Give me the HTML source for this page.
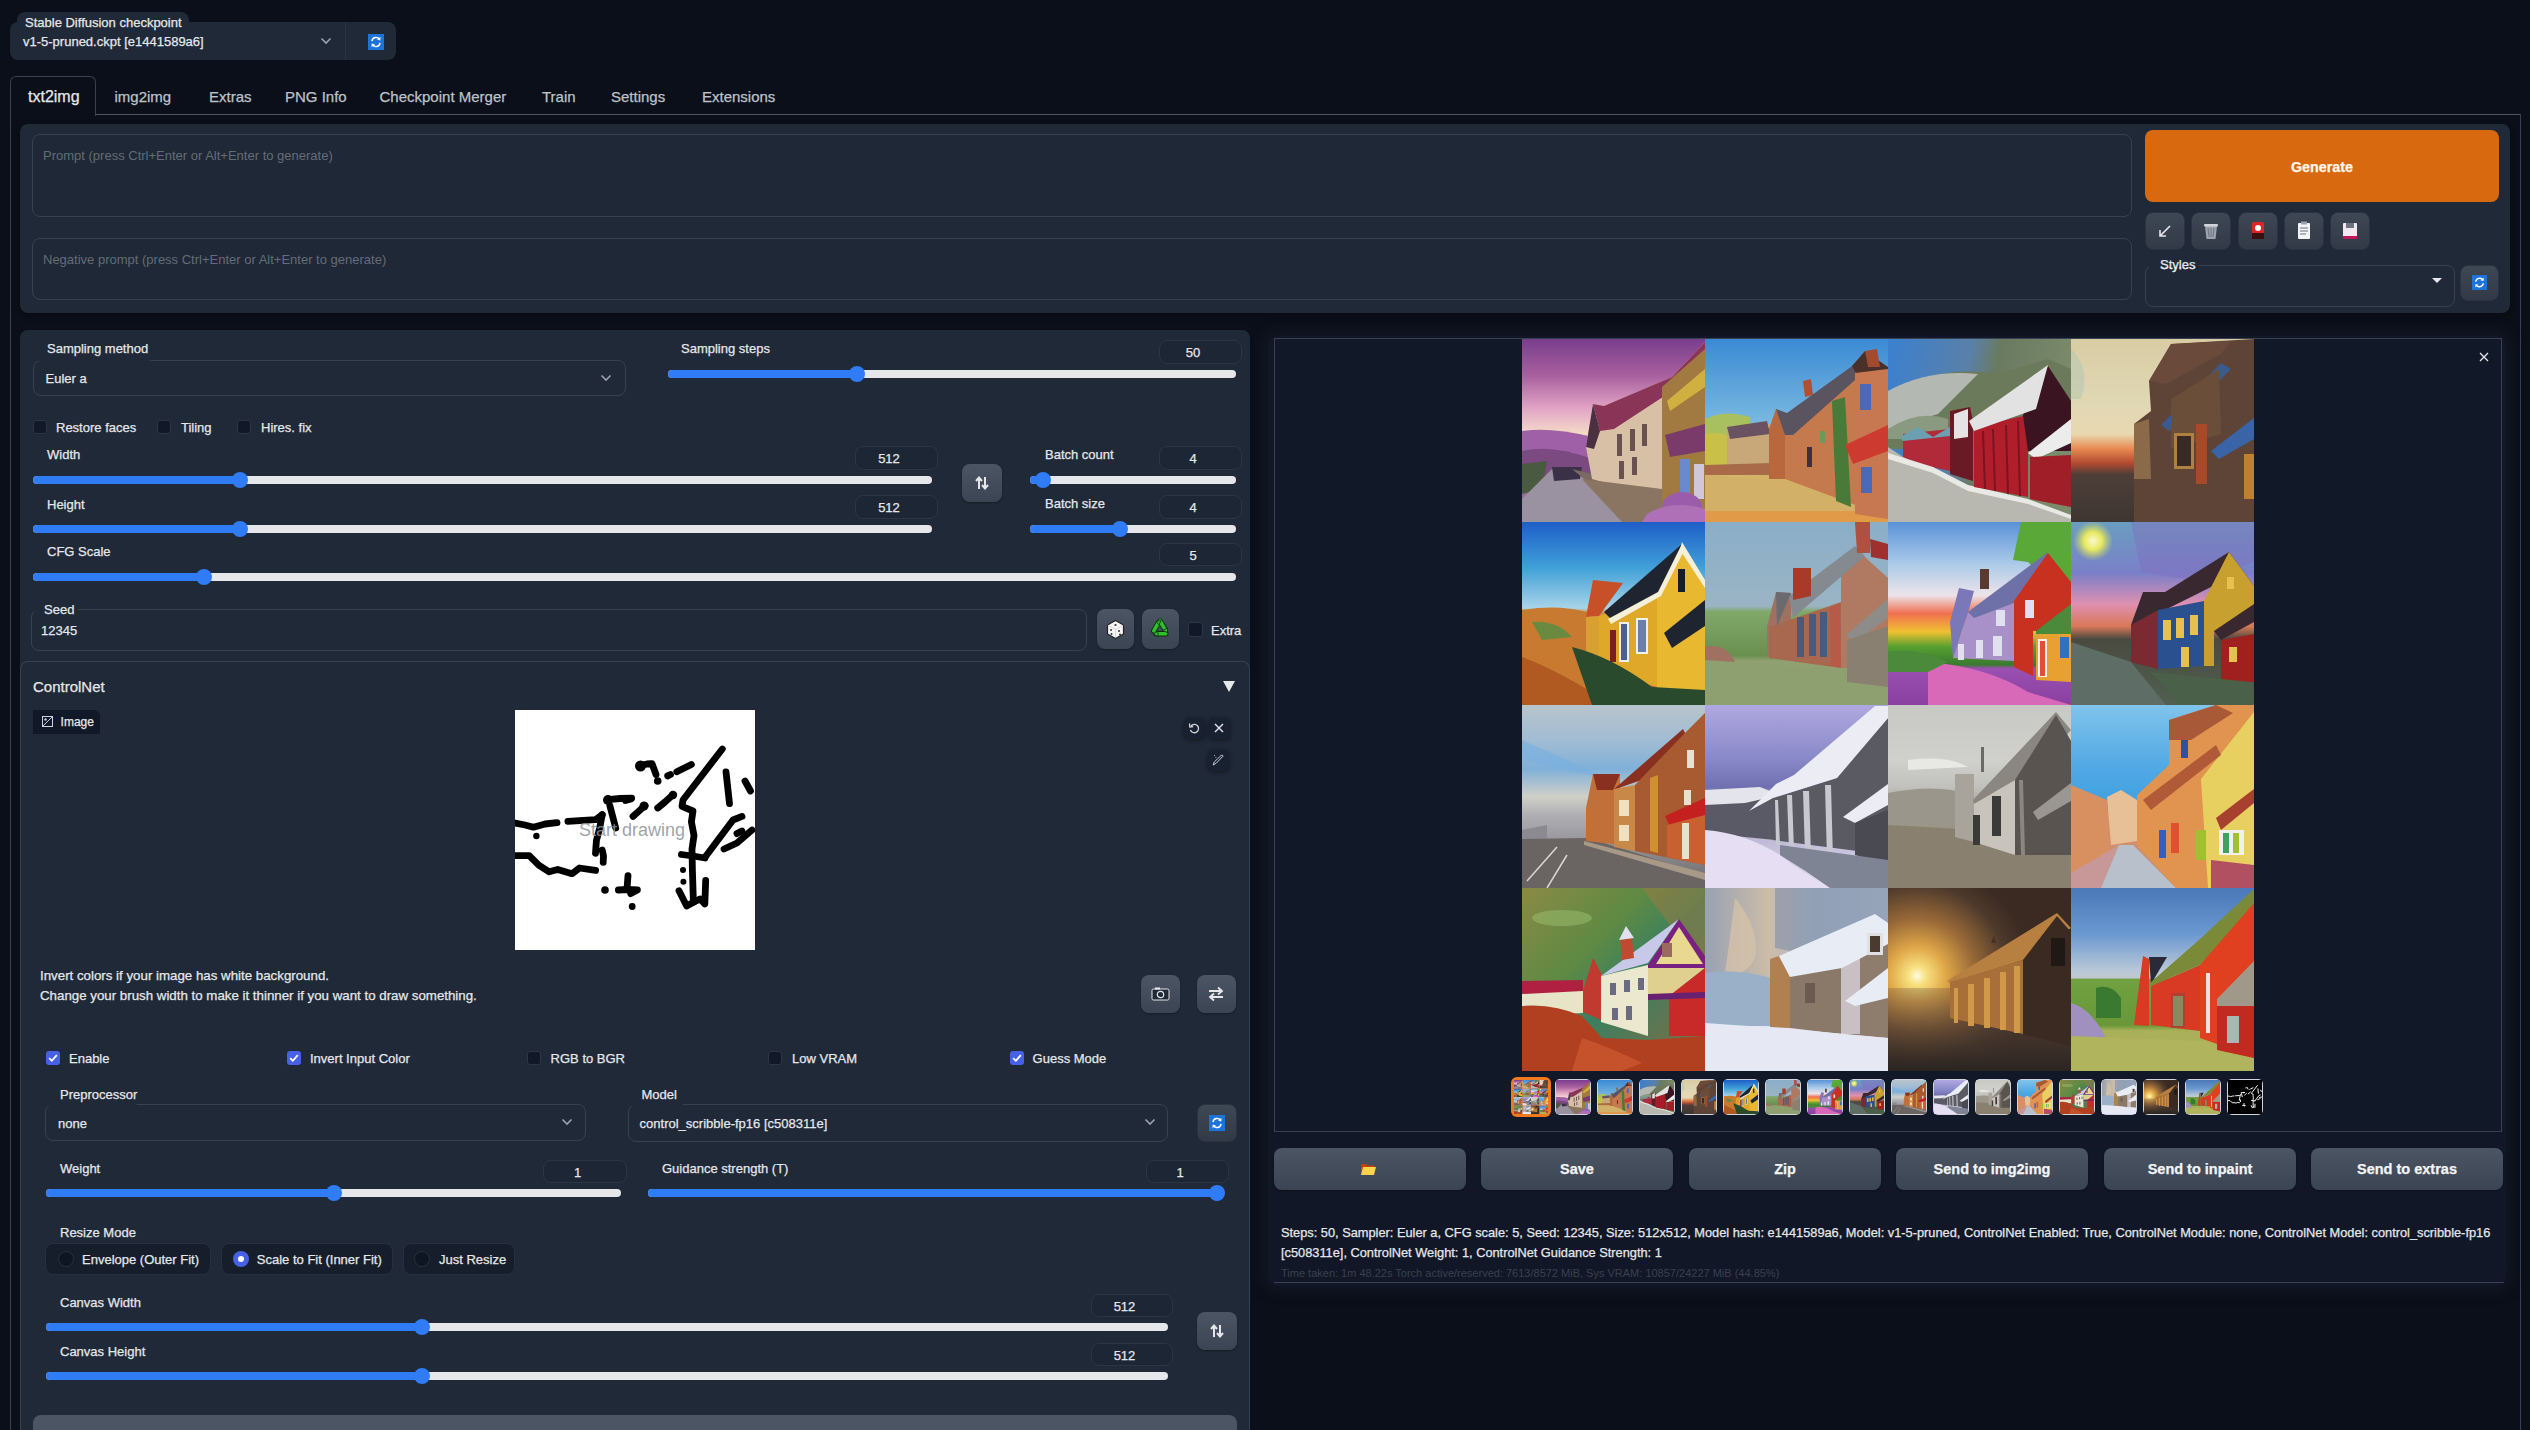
<!DOCTYPE html><html><head><meta charset="utf-8"><style>
html,body{margin:0;padding:0;background:#0b0f19;width:2530px;height:1430px;overflow:hidden;font-family:"Liberation Sans",sans-serif}
body>div,body>span,body>svg{position:absolute}
.t{position:absolute;white-space:nowrap;-webkit-text-stroke:0.25px currentColor}
.trk{position:absolute;background:#e5e7eb;border-radius:4px}
.fill{position:absolute;background:#2f7cf6;border-radius:4px}
.thumb{position:absolute;width:16px;height:16px;border-radius:8px;background:#2f7cf6}
.btn{position:absolute;background:linear-gradient(180deg,#4b5563 0%,#3b4452 100%);box-shadow:0 1px 2px rgba(0,0,0,.3)}
.tool{position:absolute;background:linear-gradient(180deg,#3e4754 0%,#323a47 100%);border-radius:8px;border:1px solid #2b3340;box-sizing:border-box}
</style></head><body>
<div style="left:10px;top:22px;width:386px;height:38px;background:#1f2937;border-radius:8px"></div>
<div style="left:17px;top:12px;width:172px;height:22px;background:#1f2937;border-radius:8px 8px 0 0"></div>
<div style="left:345px;top:22px;width:1px;height:38px;background:#2a3342"></div>
<span class="t" style="left:25px;top:13.5px;font-size:13px;line-height:17px;color:#e5e7eb;font-weight:400;">Stable Diffusion checkpoint</span>
<span class="t" style="left:23px;top:33.0px;font-size:13px;line-height:17px;color:#e5e7eb;font-weight:400;">v1-5-pruned.ckpt [e1441589a6]</span>
<svg style="left:320px;top:37px" width="12" height="8" viewBox="0 0 12 8"><path d="M1.5 1.5 L6 6 L10.5 1.5" stroke="#9ca3af" stroke-width="1.6" fill="none"/></svg>
<svg style="left:368px;top:34px" width="16" height="16" viewBox="0 0 16 16"><rect x="0" y="0" width="16" height="16" fill="#1c74d8"/><path d="M4 7.2 A4.2 4.2 0 0 1 11.6 5.2" stroke="#fff" stroke-width="1.5" fill="none"/><path d="M12 8.8 A4.2 4.2 0 0 1 4.4 10.8" stroke="#fff" stroke-width="1.5" fill="none"/><path d="M12.6 3 L12.2 6.4 L9 5.6 Z" fill="#fff"/><path d="M3.4 13 L3.8 9.6 L7 10.4 Z" fill="#fff"/></svg>
<div style="left:96px;top:114px;width:2425px;height:1px;background:#4b5563"></div>
<div style="left:10px;top:76px;width:86px;height:40px;background:#0b0f19;border:1px solid #374151;border-bottom:none;border-radius:6px 6px 0 0;box-sizing:border-box"></div>
<div style="left:10px;top:115px;width:1px;height:1315px;background:#374151"></div>
<div style="left:2520px;top:114px;width:1px;height:1316px;background:#374151"></div>
<span class="t" style="left:28px;top:86.5px;font-size:16px;line-height:20px;color:#e5e7eb;font-weight:400;">txt2img</span>
<span class="t" style="left:114.5px;top:87.0px;font-size:15px;line-height:19px;color:#bcc2cb;font-weight:400;">img2img</span>
<span class="t" style="left:209px;top:87.0px;font-size:15px;line-height:19px;color:#bcc2cb;font-weight:400;">Extras</span>
<span class="t" style="left:285px;top:87.0px;font-size:15px;line-height:19px;color:#bcc2cb;font-weight:400;">PNG Info</span>
<span class="t" style="left:379.5px;top:87.0px;font-size:15px;line-height:19px;color:#bcc2cb;font-weight:400;">Checkpoint Merger</span>
<span class="t" style="left:542px;top:87.0px;font-size:15px;line-height:19px;color:#bcc2cb;font-weight:400;">Train</span>
<span class="t" style="left:611px;top:87.0px;font-size:15px;line-height:19px;color:#bcc2cb;font-weight:400;">Settings</span>
<span class="t" style="left:702px;top:87.0px;font-size:15px;line-height:19px;color:#bcc2cb;font-weight:400;">Extensions</span>
<div style="left:20px;top:124px;width:2490px;height:189px;background:#1f2937;border-radius:8px;box-shadow:0 2px 6px rgba(0,0,0,.35)"></div>
<div style="left:32px;top:134px;width:2100px;height:83px;border:1px solid #374151;border-radius:8px;box-sizing:border-box;background:#1e2836"></div>
<div style="left:32px;top:238px;width:2100px;height:62px;border:1px solid #374151;border-radius:8px;box-sizing:border-box;background:#1e2836"></div>
<span class="t" style="left:43px;top:147.0px;font-size:13px;line-height:17px;color:#646c78;font-weight:400;-webkit-text-stroke:0">Prompt (press Ctrl+Enter or Alt+Enter to generate)</span>
<span class="t" style="left:43px;top:251.0px;font-size:13px;line-height:17px;color:#646c78;font-weight:400;-webkit-text-stroke:0">Negative prompt (press Ctrl+Enter or Alt+Enter to generate)</span>
<div style="left:2145px;top:130px;width:354px;height:72px;background:#d9690f;border-radius:8px"></div>
<span class="t" style="left:2145.0px;width:354px;text-align:center;top:157.8px;font-size:14.3px;line-height:18.3px;color:#fff7ed;font-weight:700;">Generate</span>
<div class="tool" style="left:2145px;top:212px;width:40px;height:38px"></div>
<div class="tool" style="left:2191px;top:212px;width:40px;height:38px"></div>
<div class="tool" style="left:2238px;top:212px;width:40px;height:38px"></div>
<div class="tool" style="left:2284px;top:212px;width:40px;height:38px"></div>
<div class="tool" style="left:2330px;top:212px;width:40px;height:38px"></div>
<svg style="left:2155px;top:221px" width="20" height="20" viewBox="0 0 20 20"><path d="M15 5 L5 15 M5 9 L5 15 L11 15" stroke="#e5e7eb" stroke-width="1.6" fill="none"/></svg>
<svg style="left:2202px;top:221px" width="18" height="20" viewBox="0 0 18 20"><path d="M3 5 L15 5 L13.5 18 L4.5 18 Z" fill="#9ca3af"/><rect x="2" y="3" width="14" height="2.5" rx="1" fill="#d1d5db"/><path d="M6 7 L7 16 M9 7 L9 16 M12 7 L11 16" stroke="#6b7280" stroke-width="1"/></svg>
<svg style="left:2250px;top:221px" width="16" height="20" viewBox="0 0 16 20"><rect x="2" y="1" width="12" height="17" rx="1.5" fill="#dc2626"/><circle cx="8" cy="7" r="3" fill="#fff"/><rect x="2" y="12" width="12" height="6" fill="#3a1010"/></svg>
<svg style="left:2296px;top:221px" width="16" height="20" viewBox="0 0 16 20"><rect x="2" y="2" width="12" height="16" rx="1" fill="#f3f4f6"/><rect x="5" y="0.5" width="6" height="3" fill="#9ca3af"/><path d="M4 7 H12 M4 10 H12 M4 13 H10" stroke="#6b7280" stroke-width="1"/></svg>
<svg style="left:2342px;top:221px" width="16" height="20" viewBox="0 0 16 20"><rect x="1" y="2" width="14" height="16" rx="1" fill="#f3e8f0"/><rect x="4" y="2" width="8" height="5" fill="#6b7280"/><rect x="1" y="15" width="14" height="3" fill="#be185d"/></svg>
<span class="t" style="left:2160px;top:255.5px;font-size:13px;line-height:17px;color:#e5e7eb;font-weight:400;">Styles</span>
<div style="left:2145px;top:265px;width:310px;height:42px;border:1px solid #374151;border-radius:8px;box-sizing:border-box"></div>
<div style="left:2145px;top:252px;width:57px;height:15px;background:#1f2937;border-radius:0 0 8px 0"></div>
<span class="t" style="left:2160px;top:255.5px;font-size:13px;line-height:17px;color:#e5e7eb;font-weight:400;">Styles</span>
<svg style="left:2431px;top:277px" width="12" height="7" viewBox="0 0 12 7"><path d="M1 1 L11 1 L6 6 Z" fill="#e5e7eb"/></svg>
<div class="tool" style="left:2460px;top:265px;width:39px;height:36px"></div>
<svg style="left:2472px;top:275px" width="15" height="15" viewBox="0 0 16 16"><rect x="0" y="0" width="16" height="16" fill="#1c74d8"/><path d="M4 7.2 A4.2 4.2 0 0 1 11.6 5.2" stroke="#fff" stroke-width="1.5" fill="none"/><path d="M12 8.8 A4.2 4.2 0 0 1 4.4 10.8" stroke="#fff" stroke-width="1.5" fill="none"/><path d="M12.6 3 L12.2 6.4 L9 5.6 Z" fill="#fff"/><path d="M3.4 13 L3.8 9.6 L7 10.4 Z" fill="#fff"/></svg>
<div style="left:20px;top:330px;width:1230px;height:1100px;background:#1f2937;border-radius:8px 8px 0 0"></div>
<div style="left:33px;top:360px;width:593px;height:36px;border:1px solid #374151;border-radius:8px;box-sizing:border-box"></div>
<div style="left:33px;top:338px;width:122px;height:23px;background:#1f2937;border-radius:0 0 8px 0"></div>
<span class="t" style="left:47px;top:340.0px;font-size:13px;line-height:17px;color:#e5e7eb;font-weight:400;">Sampling method</span>
<span class="t" style="left:45.5px;top:370.0px;font-size:13px;line-height:17px;color:#e5e7eb;font-weight:400;">Euler a</span>
<svg style="left:600px;top:374px" width="12" height="8" viewBox="0 0 12 8"><path d="M1.5 1.5 L6 6 L10.5 1.5" stroke="#9ca3af" stroke-width="1.6" fill="none"/></svg>
<span class="t" style="left:681px;top:339.5px;font-size:13px;line-height:17px;color:#e5e7eb;font-weight:400;">Sampling steps</span>
<div style="left:1159px;top:340px;width:83px;height:24px;border:1px solid #2c3543;border-radius:8px;background:#1d2634;box-sizing:border-box"></div>
<span class="t" style="left:1151.5px;width:83px;text-align:center;top:344.0px;font-size:13px;line-height:17px;color:#e5e7eb;font-weight:400;">50</span>
<div class="trk" style="left:668px;top:370.0px;width:568px;height:8px"></div>
<div class="fill" style="left:668px;top:370.0px;width:189px;height:8px"></div>
<div class="thumb" style="left:849px;top:366px"></div>
<div style="left:33px;top:420px;width:14px;height:14px;border-radius:3px;background:#111827;border:1px solid #2c3645;box-sizing:border-box"></div>
<span class="t" style="left:56px;top:418.5px;font-size:13px;line-height:17px;color:#e5e7eb;font-weight:400;">Restore faces</span>
<div style="left:157px;top:420px;width:14px;height:14px;border-radius:3px;background:#111827;border:1px solid #2c3645;box-sizing:border-box"></div>
<span class="t" style="left:181px;top:418.5px;font-size:13px;line-height:17px;color:#e5e7eb;font-weight:400;">Tiling</span>
<div style="left:237px;top:420px;width:14px;height:14px;border-radius:3px;background:#111827;border:1px solid #2c3645;box-sizing:border-box"></div>
<span class="t" style="left:261px;top:418.5px;font-size:13px;line-height:17px;color:#e5e7eb;font-weight:400;">Hires. fix</span>
<span class="t" style="left:47px;top:445.5px;font-size:13px;line-height:17px;color:#e5e7eb;font-weight:400;">Width</span>
<div style="left:855px;top:446px;width:83px;height:24px;border:1px solid #2c3543;border-radius:8px;background:#1d2634;box-sizing:border-box"></div>
<span class="t" style="left:847.5px;width:83px;text-align:center;top:450.0px;font-size:13px;line-height:17px;color:#e5e7eb;font-weight:400;">512</span>
<div class="trk" style="left:33px;top:476.0px;width:899px;height:8px"></div>
<div class="fill" style="left:33px;top:476.0px;width:207px;height:8px"></div>
<div class="thumb" style="left:232px;top:472px"></div>
<span class="t" style="left:47px;top:495.5px;font-size:13px;line-height:17px;color:#e5e7eb;font-weight:400;">Height</span>
<div style="left:855px;top:495px;width:83px;height:24px;border:1px solid #2c3543;border-radius:8px;background:#1d2634;box-sizing:border-box"></div>
<span class="t" style="left:847.5px;width:83px;text-align:center;top:499.0px;font-size:13px;line-height:17px;color:#e5e7eb;font-weight:400;">512</span>
<div class="trk" style="left:33px;top:525.0px;width:899px;height:8px"></div>
<div class="fill" style="left:33px;top:525.0px;width:207px;height:8px"></div>
<div class="thumb" style="left:232px;top:521px"></div>
<div class="btn" style="left:962px;top:464px;width:40px;height:38px;border-radius:8px;"></div>
<svg style="left:974px;top:475px" width="16" height="16" viewBox="0 0 16 16"><path d="M5 14 V3 M2 6 L5 2.5 L8 6" stroke="#e5e7eb" stroke-width="2" fill="none"/><path d="M11 2 V13 M8 10 L11 13.5 L14 10" stroke="#e5e7eb" stroke-width="2" fill="none"/></svg>
<span class="t" style="left:1045px;top:446.0px;font-size:13px;line-height:17px;color:#e5e7eb;font-weight:400;">Batch count</span>
<div style="left:1159px;top:446px;width:83px;height:24px;border:1px solid #2c3543;border-radius:8px;background:#1d2634;box-sizing:border-box"></div>
<span class="t" style="left:1151.5px;width:83px;text-align:center;top:450.0px;font-size:13px;line-height:17px;color:#e5e7eb;font-weight:400;">4</span>
<div class="trk" style="left:1030px;top:476.0px;width:206px;height:8px"></div>
<div class="fill" style="left:1030px;top:476.0px;width:13px;height:8px"></div>
<div class="thumb" style="left:1035px;top:472px"></div>
<span class="t" style="left:1045px;top:495.1px;font-size:13px;line-height:17px;color:#e5e7eb;font-weight:400;">Batch size</span>
<div style="left:1159px;top:495px;width:83px;height:24px;border:1px solid #2c3543;border-radius:8px;background:#1d2634;box-sizing:border-box"></div>
<span class="t" style="left:1151.5px;width:83px;text-align:center;top:499.0px;font-size:13px;line-height:17px;color:#e5e7eb;font-weight:400;">4</span>
<div class="trk" style="left:1030px;top:525.0px;width:206px;height:8px"></div>
<div class="fill" style="left:1030px;top:525.0px;width:90px;height:8px"></div>
<div class="thumb" style="left:1112px;top:521px"></div>
<span class="t" style="left:47px;top:543.0px;font-size:13px;line-height:17px;color:#e5e7eb;font-weight:400;">CFG Scale</span>
<div style="left:1159px;top:543px;width:83px;height:23px;border:1px solid #2c3543;border-radius:8px;background:#1d2634;box-sizing:border-box"></div>
<span class="t" style="left:1151.5px;width:83px;text-align:center;top:546.5px;font-size:13px;line-height:17px;color:#e5e7eb;font-weight:400;">5</span>
<div class="trk" style="left:33px;top:573.0px;width:1203px;height:8px"></div>
<div class="fill" style="left:33px;top:573.0px;width:171px;height:8px"></div>
<div class="thumb" style="left:196px;top:569px"></div>
<div style="left:31px;top:609px;width:1056px;height:42px;border:1px solid #374151;border-radius:8px;box-sizing:border-box"></div>
<div style="left:31px;top:598px;width:49px;height:14px;background:#1f2937;border-radius:0 0 8px 0"></div>
<span class="t" style="left:44px;top:601.1px;font-size:13px;line-height:17px;color:#e5e7eb;font-weight:400;">Seed</span>
<span class="t" style="left:41px;top:621.5px;font-size:13px;line-height:17px;color:#e5e7eb;font-weight:400;">12345</span>
<div class="btn" style="left:1097px;top:609px;width:37px;height:40px;border-radius:8px;"></div>
<div class="btn" style="left:1142px;top:609px;width:37px;height:40px;border-radius:8px;"></div>
<svg style="left:1105px;top:619px" width="21" height="21" viewBox="0 0 21 21"><path d="M10.5 1.5 L18.5 6 L18.5 15 L10.5 19.5 L2.5 15 L2.5 6 Z" fill="#f5f5f5" stroke="#222" stroke-width="1.2"/><path d="M2.8 6.2 L10.5 10.5 L18.2 6.2 M10.5 10.5 L10.5 19" stroke="#cfcfcf" stroke-width="0.8" fill="none"/><circle cx="10.5" cy="6" r="1.1" fill="#333"/><circle cx="6" cy="11" r="1" fill="#333"/><circle cx="6.5" cy="15" r="1" fill="#333"/><circle cx="14" cy="12" r="1" fill="#333"/><circle cx="15" cy="15.5" r="1" fill="#333"/></svg>
<svg style="left:1150px;top:618px" width="21" height="21" viewBox="0 0 21 21"><g fill="none" stroke-linecap="round" stroke-linejoin="round"><path d="M10 3 L14.8 11.2 M15.8 15.8 L6 15.8 M3.8 12.8 L8.3 5" stroke="#0a300a" stroke-width="5.4"/><path d="M10 3 L14.8 11.2 M15.8 15.8 L6 15.8 M3.8 12.8 L8.3 5" stroke="#2fbf2f" stroke-width="3.6"/></g><path d="M12.5 12.5 L17.5 10 L17.5 14.5 Z" fill="#2fbf2f" stroke="#0a300a" stroke-width="0.8"/><path d="M8 18.5 L3.5 15.8 L8 13 Z" fill="#2fbf2f" stroke="#0a300a" stroke-width="0.8"/><path d="M6 3.5 L11 2.5 L9 7 Z" fill="#2fbf2f" stroke="#0a300a" stroke-width="0.8"/></svg>
<div style="left:1188px;top:622px;width:15px;height:15px;border-radius:3px;background:#111827;border:1px solid #2c3645;box-sizing:border-box"></div>
<span class="t" style="left:1211px;top:621.5px;font-size:13px;line-height:17px;color:#e5e7eb;font-weight:400;">Extra</span>
<div style="left:20px;top:661px;width:1230px;height:769px;border:1px solid #374151;border-bottom:none;border-radius:8px 8px 0 0;box-sizing:border-box"></div>
<span class="t" style="left:33px;top:677.0px;font-size:15px;line-height:19px;color:#e5e7eb;font-weight:400;">ControlNet</span>
<svg style="left:1222px;top:680px" width="14" height="13" viewBox="0 0 14 13"><path d="M1 1 L13 1 L7 12 Z" fill="#e5e7eb"/></svg>
<div style="left:33px;top:710px;width:67px;height:24px;background:#111827;border-radius:0 6px 0 0"></div>
<svg style="left:42px;top:716px" width="11" height="11" viewBox="0 0 11 11"><rect x="0.5" y="0.5" width="10" height="10" fill="none" stroke="#cbd5e1" stroke-width="1"/><path d="M1 10 L10 1" stroke="#cbd5e1" stroke-width="1"/><circle cx="3.5" cy="3.5" r="1.2" fill="#cbd5e1"/></svg>
<span class="t" style="left:60.6px;top:714.0px;font-size:12px;line-height:16px;color:#e5e7eb;font-weight:400;">Image</span>
<div style="left:515px;top:710px;width:240px;height:240px;background:#fff"></div>
<svg style="left:515px;top:710px" width="240" height="240" viewBox="0 0 240 240"><defs><g id="scrib" fill="none" stroke-width="6.8" stroke-linecap="round" stroke-linejoin="round"><path d="M0 113 L10 115 L18.5 117.2 L30 114 L42 112.6"/><path d="M52.9 111.4 L80.5 109.7 L87.2 104.7"/><path d="M87.2 104.7 L84.7 118 L81.4 130.7 L80.5 143.3"/><path d="M87.2 140 L88.5 146 L88.2 152.3"/><path d="M0 145.7 L14.2 145.7 L23.7 155.2 L34.2 161.8 L42.7 159.4 L57 163.7 L64.5 158 L80.6 160.4"/><path d="M93 89.6 L105 88.5 L116.6 88.2"/><path d="M94.8 95.4 L100.7 118"/><path d="M118 106.4 L124 101 L130 95.5"/><path d="M110.5 90.5 L116 89"/><path d="M125.5 55.5 L132 54 L137 53.6 L141 64.5"/><path d="M152.7 65.9 L155.5 64.5"/><path d="M161.8 61.8 L176.4 54.5"/><path d="M142.7 98 L150 92 L158.2 84.5"/><path d="M207.3 39 L168 90 L167 96.4 L178 101 L176.4 111.8 L179 125.5 L177 139 L177.4 160 L178.4 192.2"/><path d="M166.4 144.5 L178 146 L190 148"/><path d="M190 147.3 L218 110 L227 106.4"/><path d="M209 139 L222 133 L237 120"/><path d="M222 123.6 L227 121"/><path d="M211 61.8 L214.5 93.6"/><path d="M230 71 L235.5 81"/><path d="M164 180.8 L171.7 196 L178 192.5 L185 189 L189.8 194 L190.7 170.4"/><path d="M113 165.6 L112 179"/><path d="M103.4 180 L112 179.5 L122.4 180 L115.7 183.6"/></g></defs><use href="#scrib" stroke="#000"/><g fill="#000"><circle cx="21.4" cy="126" r="3.2"/><circle cx="90" cy="180" r="3.8"/><circle cx="117.2" cy="196.5" r="3.4"/><circle cx="142.7" cy="71" r="3.8"/><circle cx="125.5" cy="56" r="5.5"/><circle cx="93" cy="90" r="5"/><circle cx="168" cy="160" r="3"/><circle cx="168.4" cy="171.8" r="3"/><circle cx="158" cy="85" r="4.2"/><circle cx="129" cy="96" r="4.5"/></g></svg>
<span class="t" style="left:579px;top:819px;font-size:18px;line-height:22px;color:rgba(140,146,156,.85);-webkit-text-stroke:0">Start drawing</span>
<div style="left:1184px;top:718px;width:21px;height:21px;background:#182130;border-radius:5px;box-shadow:0 1px 4px rgba(0,0,0,.45)"></div>
<div style="left:1209px;top:718px;width:21px;height:21px;background:#182130;border-radius:5px;box-shadow:0 1px 4px rgba(0,0,0,.45)"></div>
<div style="left:1208px;top:750px;width:21px;height:21px;background:#182130;border-radius:5px;box-shadow:0 1px 4px rgba(0,0,0,.45)"></div>
<svg style="left:1188px;top:722px" width="13" height="13" viewBox="0 0 13 13"><path d="M3 4 A4.2 4.2 0 1 1 2.4 8" stroke="#d1d5db" stroke-width="1.3" fill="none"/><path d="M1.5 1.5 L1.8 5 L5.2 4.6" stroke="#d1d5db" stroke-width="1.3" fill="none"/></svg>
<svg style="left:1213px;top:722px" width="12" height="12" viewBox="0 0 12 12"><path d="M2 2 L10 10 M10 2 L2 10" stroke="#e5e7eb" stroke-width="1.4"/></svg>
<svg style="left:1211px;top:753px" width="14" height="14" viewBox="0 0 14 14"><path d="M2.2 12 L3.2 9 L10.2 2.4 Q11.8 1.6 12 3.2 L5.2 10.2 Z" stroke="#c8ccd4" stroke-width="1" fill="none"/><path d="M3.5 2.2 L3.8 3 M4.8 4.2 L5 5" stroke="#c8ccd4" stroke-width="1"/></svg>
<span class="t" style="left:40px;top:967.4px;font-size:13.3px;line-height:17.3px;color:#e5e7eb;font-weight:400;">Invert colors if your image has white background.</span>
<span class="t" style="left:40px;top:987.4px;font-size:13.3px;line-height:17.3px;color:#e5e7eb;font-weight:400;">Change your brush width to make it thinner if you want to draw something.</span>
<div class="btn" style="left:1141px;top:975px;width:39px;height:38px;border-radius:8px;"></div>
<div class="btn" style="left:1197px;top:975px;width:39px;height:38px;border-radius:8px;"></div>
<svg style="left:1151px;top:986px" width="19" height="16" viewBox="0 0 19 16"><rect x="1" y="3" width="17" height="11" rx="1.5" fill="#1f2937" stroke="#e5e7eb" stroke-width="1"/><circle cx="9.5" cy="8.5" r="3.2" fill="none" stroke="#e5e7eb" stroke-width="1.2"/><rect x="4" y="1.5" width="5" height="2" fill="#e5e7eb"/></svg>
<svg style="left:1207px;top:986px" width="18" height="16" viewBox="0 0 18 16"><path d="M2 5 H15 M11 1.5 L15 5 L11 8.5" stroke="#e5e7eb" stroke-width="1.8" fill="none"/><path d="M16 11 H3 M7 7.5 L3 11 L7 14.5" stroke="#e5e7eb" stroke-width="1.8" fill="none"/></svg>
<div style="left:46px;top:1051px;width:14px;height:14px;border-radius:3px;background:#4761e6"></div>
<svg style="left:46px;top:1051px" width="14" height="14" viewBox="0 0 14 14"><path d="M3.2 7.2 L5.8 9.8 L10.8 4.2" stroke="#fff" stroke-width="1.8" fill="none"/></svg>
<span class="t" style="left:69px;top:1049.5px;font-size:13px;line-height:17px;color:#e5e7eb;font-weight:400;">Enable</span>
<div style="left:287px;top:1051px;width:14px;height:14px;border-radius:3px;background:#4761e6"></div>
<svg style="left:287px;top:1051px" width="14" height="14" viewBox="0 0 14 14"><path d="M3.2 7.2 L5.8 9.8 L10.8 4.2" stroke="#fff" stroke-width="1.8" fill="none"/></svg>
<span class="t" style="left:310px;top:1049.5px;font-size:13px;line-height:17px;color:#e5e7eb;font-weight:400;">Invert Input Color</span>
<div style="left:527px;top:1051px;width:14px;height:14px;border-radius:3px;background:#111827;border:1px solid #2c3645;box-sizing:border-box"></div>
<span class="t" style="left:550.6px;top:1049.5px;font-size:13px;line-height:17px;color:#e5e7eb;font-weight:400;">RGB to BGR</span>
<div style="left:768px;top:1051px;width:14px;height:14px;border-radius:3px;background:#111827;border:1px solid #2c3645;box-sizing:border-box"></div>
<span class="t" style="left:792px;top:1049.5px;font-size:13px;line-height:17px;color:#e5e7eb;font-weight:400;">Low VRAM</span>
<div style="left:1010px;top:1051px;width:14px;height:14px;border-radius:3px;background:#4761e6"></div>
<svg style="left:1010px;top:1051px" width="14" height="14" viewBox="0 0 14 14"><path d="M3.2 7.2 L5.8 9.8 L10.8 4.2" stroke="#fff" stroke-width="1.8" fill="none"/></svg>
<span class="t" style="left:1032.6px;top:1049.5px;font-size:13px;line-height:17px;color:#e5e7eb;font-weight:400;">Guess Mode</span>
<span class="t" style="left:60px;top:1085.9px;font-size:13px;line-height:17px;color:#e5e7eb;font-weight:400;">Preprocessor</span>
<div style="left:45px;top:1104px;width:541px;height:37px;border:1px solid #374151;border-radius:8px;box-sizing:border-box"></div>
<div style="left:45px;top:1084px;width:95px;height:22px;background:#1f2937;border-radius:0 0 8px 0"></div>
<span class="t" style="left:60px;top:1085.9px;font-size:13px;line-height:17px;color:#e5e7eb;font-weight:400;">Preprocessor</span>
<span class="t" style="left:58px;top:1114.5px;font-size:13px;line-height:17px;color:#e5e7eb;font-weight:400;">none</span>
<svg style="left:561px;top:1118px" width="12" height="8" viewBox="0 0 12 8"><path d="M1.5 1.5 L6 6 L10.5 1.5" stroke="#9ca3af" stroke-width="1.6" fill="none"/></svg>
<div style="left:628px;top:1104px;width:540px;height:38px;border:1px solid #374151;border-radius:8px;box-sizing:border-box"></div>
<div style="left:628px;top:1084px;width:58px;height:22px;background:#1f2937;border-radius:0 0 8px 0"></div>
<span class="t" style="left:641.5px;top:1085.5px;font-size:13px;line-height:17px;color:#e5e7eb;font-weight:400;">Model</span>
<span class="t" style="left:639.6px;top:1114.5px;font-size:13px;line-height:17px;color:#e5e7eb;font-weight:400;">control_scribble-fp16 [c508311e]</span>
<svg style="left:1143.5px;top:1118px" width="12" height="8" viewBox="0 0 12 8"><path d="M1.5 1.5 L6 6 L10.5 1.5" stroke="#9ca3af" stroke-width="1.6" fill="none"/></svg>
<div class="tool" style="left:1197px;top:1104px;width:40px;height:38px"></div>
<svg style="left:1209px;top:1115px" width="16" height="16" viewBox="0 0 16 16"><rect x="0" y="0" width="16" height="16" fill="#1c74d8"/><path d="M4 7.2 A4.2 4.2 0 0 1 11.6 5.2" stroke="#fff" stroke-width="1.5" fill="none"/><path d="M12 8.8 A4.2 4.2 0 0 1 4.4 10.8" stroke="#fff" stroke-width="1.5" fill="none"/><path d="M12.6 3 L12.2 6.4 L9 5.6 Z" fill="#fff"/><path d="M3.4 13 L3.8 9.6 L7 10.4 Z" fill="#fff"/></svg>
<span class="t" style="left:60px;top:1160.2px;font-size:13px;line-height:17px;color:#e5e7eb;font-weight:400;">Weight</span>
<div style="left:543px;top:1160px;width:84px;height:23px;border:1px solid #2c3543;border-radius:8px;background:#1d2634;box-sizing:border-box"></div>
<span class="t" style="left:535.5px;width:84px;text-align:center;top:1163.5px;font-size:13px;line-height:17px;color:#e5e7eb;font-weight:400;">1</span>
<div class="trk" style="left:46px;top:1189.0px;width:574.5px;height:8px"></div>
<div class="fill" style="left:46px;top:1189.0px;width:287.7px;height:8px"></div>
<div class="thumb" style="left:325.7px;top:1185px"></div>
<span class="t" style="left:662px;top:1160.0px;font-size:13px;line-height:17px;color:#e5e7eb;font-weight:400;">Guidance strength (T)</span>
<div style="left:1146px;top:1160px;width:83px;height:23px;border:1px solid #2c3543;border-radius:8px;background:#1d2634;box-sizing:border-box"></div>
<span class="t" style="left:1138.5px;width:83px;text-align:center;top:1163.5px;font-size:13px;line-height:17px;color:#e5e7eb;font-weight:400;">1</span>
<div class="trk" style="left:648px;top:1189.0px;width:576px;height:8px"></div>
<div class="fill" style="left:648px;top:1189.0px;width:569px;height:8px"></div>
<div class="thumb" style="left:1209px;top:1185px"></div>
<span class="t" style="left:60px;top:1223.5px;font-size:13px;line-height:17px;color:#e5e7eb;font-weight:400;">Resize Mode</span>
<div style="left:45px;top:1243px;width:166px;height:32px;background:#161e2b;border:1px solid #263040;border-radius:8px;box-sizing:border-box"></div>
<div style="left:57.7px;top:1251px;width:16px;height:16px;border-radius:8px;background:#0f1623;border:1px solid #263040;box-sizing:border-box"></div>
<span class="t" style="left:82px;top:1250.5px;font-size:13px;line-height:17px;color:#e5e7eb;font-weight:400;">Envelope (Outer Fit)</span>
<div style="left:221px;top:1243px;width:172px;height:32px;background:#161e2b;border:1px solid #263040;border-radius:8px;box-sizing:border-box"></div>
<div style="left:232.6px;top:1251px;width:16px;height:16px;border-radius:8px;background:#4761e6"></div>
<div style="left:237.6px;top:1256px;width:6px;height:6px;border-radius:3px;background:#fff"></div>
<span class="t" style="left:256.8px;top:1250.5px;font-size:13px;line-height:17px;color:#e5e7eb;font-weight:400;">Scale to Fit (Inner Fit)</span>
<div style="left:403px;top:1243px;width:112px;height:32px;background:#161e2b;border:1px solid #263040;border-radius:8px;box-sizing:border-box"></div>
<div style="left:414px;top:1251px;width:16px;height:16px;border-radius:8px;background:#0f1623;border:1px solid #263040;box-sizing:border-box"></div>
<span class="t" style="left:439px;top:1250.5px;font-size:13px;line-height:17px;color:#e5e7eb;font-weight:400;">Just Resize</span>
<span class="t" style="left:60px;top:1293.5px;font-size:13px;line-height:17px;color:#e5e7eb;font-weight:400;">Canvas Width</span>
<div style="left:1091px;top:1294px;width:82px;height:23px;border:1px solid #2c3543;border-radius:8px;background:#1d2634;box-sizing:border-box"></div>
<span class="t" style="left:1083.5px;width:82px;text-align:center;top:1297.5px;font-size:13px;line-height:17px;color:#e5e7eb;font-weight:400;">512</span>
<div class="trk" style="left:46px;top:1323.0px;width:1122px;height:8px"></div>
<div class="fill" style="left:46px;top:1323.0px;width:376px;height:8px"></div>
<div class="thumb" style="left:414px;top:1319px"></div>
<span class="t" style="left:60px;top:1342.5px;font-size:13px;line-height:17px;color:#e5e7eb;font-weight:400;">Canvas Height</span>
<div style="left:1091px;top:1343px;width:82px;height:23px;border:1px solid #2c3543;border-radius:8px;background:#1d2634;box-sizing:border-box"></div>
<span class="t" style="left:1083.5px;width:82px;text-align:center;top:1346.5px;font-size:13px;line-height:17px;color:#e5e7eb;font-weight:400;">512</span>
<div class="trk" style="left:46px;top:1372.0px;width:1122px;height:8px"></div>
<div class="fill" style="left:46px;top:1372.0px;width:376px;height:8px"></div>
<div class="thumb" style="left:414px;top:1368px"></div>
<div class="btn" style="left:1197px;top:1312px;width:40px;height:38px;border-radius:8px;"></div>
<svg style="left:1209px;top:1323px" width="16" height="16" viewBox="0 0 16 16"><path d="M5 14 V3 M2 6 L5 2.5 L8 6" stroke="#e5e7eb" stroke-width="2" fill="none"/><path d="M11 2 V13 M8 10 L11 13.5 L14 10" stroke="#e5e7eb" stroke-width="2" fill="none"/></svg>
<div style="left:33px;top:1415px;width:1204px;height:30px;background:#4b5563;border-radius:8px 8px 0 0"></div>
<div style="left:1268px;top:336px;width:1238px;height:950px;background:#111726;border-radius:10px;box-shadow:0 0 12px 6px rgba(17,23,38,.85)"></div>
<div style="left:1274px;top:338px;width:1228px;height:793px;border:1px solid #374151;border-bottom:none;box-sizing:border-box;background:#111827"></div>
<div style="left:1274px;top:1131px;width:1228px;height:1px;background:#374151"></div>
<svg style="left:0;top:0;position:absolute" width="0" height="0"><defs><symbol id="t0" viewBox="0 0 183 183" preserveAspectRatio="none">
<defs><linearGradient id="g0s" x1="0" y1="0" x2="0" y2="1"><stop offset="0" stop-color="#7a3d8e"/><stop offset="0.2" stop-color="#a8609e"/><stop offset="0.38" stop-color="#e2a4c6"/><stop offset="0.47" stop-color="#efc8c8"/><stop offset="0.52" stop-color="#f4dcc4"/><stop offset="0.56" stop-color="#b678b2"/><stop offset="1" stop-color="#8a6a86"/></linearGradient></defs>
<rect width="183" height="183" fill="url(#g0s)"/>
<path d="M0 92 Q30 88 70 98 L70 140 L0 145 Z" fill="#a060a8"/>
<path d="M0 112 Q30 105 70 120 L70 140 L0 150 Z" fill="#7a4a80"/>
<path d="M0 125 L25 122 L20 150 L0 155 Z" fill="#4a5a40"/>
<path d="M0 183 L0 160 L30 130 L50 130 L115 183 Z" fill="#9a92a0"/>
<path d="M30 128 L60 128 L58 140 L32 142 Z" fill="#3a3048"/>
<path d="M50 130 L115 183 L140 183 L140 160 L70 135 Z" fill="#7a6a62"/>
<path d="M64 108 L71 65 L82 67 L150 38 L183 3 L183 183 L140 183 L140 160 L70 140 Z" fill="#d8c0a6"/>
<path d="M71 65 L82 67 L150 38 L183 3 L183 20 L150 52 L92 90 L78 92 Z" fill="#8a3458"/>
<path d="M64 108 L71 65 L78 92 L72 110 Z" fill="#4a3040"/>
<path d="M140 48 L183 10 L183 183 L140 183 Z" fill="#a07a40"/>
<path d="M145 62 L183 30 L183 48 L148 72 Z" fill="#d0b040"/>
<path d="M143 96 L183 85 L183 112 L148 118 Z" fill="#7a3a6a"/>
<rect x="158" y="120" width="10" height="40" fill="#6a8ad0"/>
<rect x="172" y="125" width="10" height="35" fill="#d0c8d8"/>
<rect x="95" y="95" width="5" height="22" fill="#6a5050"/><rect x="108" y="90" width="5" height="22" fill="#6a5050"/><rect x="120" y="85" width="5" height="22" fill="#6a5050"/>
<rect x="97" y="122" width="5" height="18" fill="#6a5050"/><rect x="110" y="118" width="5" height="18" fill="#6a5050"/>
<path d="M60 140 L140 150 L140 183 L100 183 Z" fill="#8a7462"/>
<ellipse cx="160" cy="168" rx="20" ry="15" fill="#9c5cac"/>
<path d="M125 175 Q150 160 183 170 L183 183 L120 183 Z" fill="#b070b8"/>
</symbol><symbol id="t1" viewBox="0 0 183 183" preserveAspectRatio="none">
<defs><linearGradient id="g1s" x1="0" y1="0" x2="0" y2="1"><stop offset="0" stop-color="#3b8ad4"/><stop offset="0.45" stop-color="#78b8e0"/><stop offset="0.6" stop-color="#b0c080"/><stop offset="0.75" stop-color="#d4b468"/><stop offset="1" stop-color="#e0a050"/></linearGradient></defs>
<rect width="183" height="183" fill="url(#g1s)"/>
<path d="M0 80 Q20 70 45 78 L50 130 L0 130 Z" fill="#a8c060"/>
<path d="M0 95 Q25 90 40 110 L40 128 L0 130 Z" fill="#c8c048"/>
<path d="M22 90 L65 85 L65 130 L22 130 Z" fill="#c8a878"/>
<path d="M22 88 L62 82 L65 95 L25 100 Z" fill="#6a5262"/>
<path d="M0 126 L66 124 L66 136 L0 136 Z" fill="#a86a48"/>
<path d="M0 136 L183 150 L183 183 L0 183 Z" fill="#d2b068"/>
<path d="M0 172 L183 172 L183 183 L0 183 Z" fill="#e09a48"/>
<path d="M64 140 L64 90 L71 70 L80 78 L80 140 Z" fill="#b8683c"/>
<path d="M80 85 L150 28 L183 28 L183 178 L80 140 Z" fill="#c47a4c"/>
<path d="M71 70 L82 74 L150 25 L158 34 L88 96 L80 96 Z" fill="#5a5460"/>
<path d="M98 42 L106 40 L108 56 L100 58 Z" fill="#b05030"/>
<path d="M147 27 L160 12 L183 28 L183 38 L152 36 Z" fill="#4a3028"/>
<path d="M160 12 L172 10 L175 28 L163 28 Z" fill="#a04a30"/>
<path d="M150 34 L183 30 L183 180 L150 175 Z" fill="#c87850"/>
<path d="M127 62 L140 58 L146 168 L131 162 Z" fill="#4a7a38"/>
<path d="M140 106 L183 86 L183 112 L148 125 Z" fill="#cc3a30"/>
<rect x="155" y="45" width="11" height="26" fill="#4a6ab8"/><rect x="156" y="128" width="11" height="26" fill="#4a6ab8"/>
<rect x="102" y="108" width="5" height="20" fill="#3a3040"/><rect x="115" y="92" width="5" height="12" fill="#6a9a5a"/>
</symbol><symbol id="t2" viewBox="0 0 183 183" preserveAspectRatio="none">
<defs><linearGradient id="g2s" x1="0" y1="0" x2="1" y2="0.2"><stop offset="0" stop-color="#3a80d0"/><stop offset="0.45" stop-color="#5a80a8"/><stop offset="0.6" stop-color="#6a7a60"/><stop offset="1" stop-color="#7a8a6a"/></linearGradient></defs>
<rect width="183" height="183" fill="url(#g2s)"/>
<path d="M0 55 Q50 25 110 35 L160 20 L183 30 L183 110 L0 110 Z" fill="#6a7a5a"/>
<path d="M0 52 Q40 30 90 35 Q70 55 50 75 L0 90 Z" fill="#b4b8b2"/>
<path d="M0 90 Q30 70 60 80 L60 100 L0 100 Z" fill="#8a9a80"/>
<path d="M15 95 L62 90 L62 132 L15 122 Z" fill="#b02a3a"/>
<path d="M12 98 L30 88 L45 98 L62 88 L62 97 L15 102 Z" fill="#6aa0b0"/>
<path d="M62 72 L82 68 L85 82 L85 142 L62 135 Z" fill="#6a1a24"/>
<path d="M66 75 L80 70 L80 98 L66 100 Z" fill="#e4e4e4"/>
<path d="M0 183 L0 108 L15 118 L45 132 L80 150 L140 163 L183 178 L183 183 Z" fill="#b8b8b0"/>
<path d="M0 120 L45 134 L80 152 L140 165 L183 180 L183 176 L140 160 L80 146 L45 128 L0 114 Z" fill="#e8e8e4"/>
<path d="M86 88 L140 76 L140 158 L86 148 Z" fill="#b01e2c"/>
<path d="M135 76 L160 27 L183 62 L183 112 L140 112 Z" fill="#3a1420"/>
<path d="M81 82 L160 26 L148 70 L86 92 Z" fill="#e2e2e2"/>
<path d="M140 114 L183 80 L183 104 L148 120 Z" fill="#ececec"/>
<path d="M142 118 L183 116 L183 168 L142 160 Z" fill="#a01e28"/>
<path d="M95 92 L97 150 M105 90 L107 152 M118 86 L120 155 M130 82 L132 157" stroke="#7a1420" stroke-width="2"/>
</symbol><symbol id="t3" viewBox="0 0 183 183" preserveAspectRatio="none">
<defs><linearGradient id="g3s" x1="0" y1="0" x2="0" y2="1"><stop offset="0" stop-color="#d8cca4"/><stop offset="0.35" stop-color="#e0d8b4"/><stop offset="0.52" stop-color="#e8d8b0"/><stop offset="0.6" stop-color="#e88a50"/><stop offset="0.68" stop-color="#b04a30"/><stop offset="0.74" stop-color="#4e3e38"/><stop offset="1" stop-color="#3e3632"/></linearGradient></defs>
<rect width="183" height="183" fill="url(#g3s)"/>
<path d="M0 10 Q20 30 10 60 L0 60 Z" fill="#b8c8b0" opacity="0.6"/>
<path d="M63 183 L63 85 L80 72 L78 42 L100 5 L183 0 L183 183 Z" fill="#5e4436"/>
<path d="M78 42 L100 5 L160 2 L150 15 L95 45 Z" fill="#6a4a3a"/>
<path d="M90 86 L150 24 L160 30 L98 92 Z" fill="#3a5a90"/>
<path d="M100 60 L148 30 L150 95 L100 110 Z" fill="#6a4e3a"/>
<path d="M140 112 L183 79 L183 100 L148 120 Z" fill="#3a64a8"/>
<rect x="103" y="94" width="20" height="36" fill="#b08040"/><rect x="106" y="97" width="14" height="30" fill="#3a2a26"/>
<rect x="125" y="85" width="11" height="60" fill="#a84a2a"/>
<rect x="173" y="115" width="10" height="45" fill="#c08030"/>
<path d="M63 85 L78 80 L80 140 L63 140 Z" fill="#8a6a48"/>
</symbol><symbol id="t4" viewBox="0 0 183 183" preserveAspectRatio="none">
<defs><linearGradient id="g4s" x1="0" y1="0" x2="0" y2="1"><stop offset="0" stop-color="#1e5ec8"/><stop offset="0.25" stop-color="#40a0d8"/><stop offset="0.47" stop-color="#a8d4e8"/><stop offset="0.5" stop-color="#c89048"/><stop offset="1" stop-color="#b05a24"/></linearGradient></defs>
<rect width="183" height="183" fill="url(#g4s)"/>
<path d="M0 88 Q35 82 65 90 L65 183 L0 183 Z" fill="#c87a30"/>
<path d="M10 100 Q35 98 50 115 L20 118 Z" fill="#6a8a40"/>
<path d="M0 135 Q40 150 90 183 L0 183 Z" fill="#b05a22"/>
<path d="M64 95 L71 58 L101 61 L77 94 Z" fill="#c85028"/>
<path d="M64 95 L77 94 L80 150 L64 140 Z" fill="#d8a030"/>
<path d="M77 94 L135 75 L135 165 L77 150 Z" fill="#e0a828"/>
<path d="M135 75 L160 22 L183 62 L183 183 L135 170 Z" fill="#e8b830"/>
<path d="M82 90 L160 22 L136 72 L90 98 Z" fill="#1e2430"/>
<path d="M160 20 L183 58 L183 66 L158 28 Z" fill="#f4f0d8"/>
<path d="M86 97 L136 70 L160 22 L163 27 L139 74 L89 102 Z" fill="#f4f0d8"/>
<path d="M142 111 L183 78 L183 104 L150 126 Z" fill="#1e2430"/>
<rect x="97" y="100" width="10" height="40" fill="#f0f0f0"/><rect x="99" y="102" width="6" height="36" fill="#4a6090"/>
<rect x="114" y="96" width="12" height="36" fill="#f0f0f0"/><rect x="116" y="98" width="8" height="32" fill="#6a80a8"/>
<rect x="88" y="108" width="6" height="32" fill="#7a2020"/>
<rect x="156" y="47" width="7" height="23" fill="#1a1a2a"/>
<path d="M50 125 Q90 135 130 165 L183 168 L183 183 L70 183 Z" fill="#2a4a2e"/>
</symbol><symbol id="t5" viewBox="0 0 183 183" preserveAspectRatio="none">
<defs><linearGradient id="g5s" x1="0" y1="0" x2="0" y2="1"><stop offset="0" stop-color="#8aaec8"/><stop offset="0.46" stop-color="#9ab4c4"/><stop offset="0.49" stop-color="#80a868"/><stop offset="0.73" stop-color="#6a9050"/><stop offset="0.76" stop-color="#90a070"/><stop offset="1" stop-color="#98a878"/></linearGradient></defs>
<rect width="183" height="183" fill="url(#g5s)"/>
<path d="M0 125 Q20 120 30 140 L0 145 Z" fill="#a07060"/>
<path d="M0 138 L183 150 L183 183 L0 183 Z" fill="#8ea070"/>
<path d="M62 105 L71 70 L86 71 L86 136 L62 135 Z" fill="#a07060"/>
<path d="M64 105 L136 80 L136 146 L64 136 Z" fill="#a86850"/>
<path d="M136 47 L150 26 L183 56 L183 150 L136 146 Z" fill="#b07a62"/>
<path d="M84 74 L150 24 L160 34 L88 96 Z" fill="#848a90"/>
<path d="M71 70 L86 71 L72 104 Z" fill="#6a6a70"/>
<path d="M88 46 L106 46 L106 74 L88 78 Z" fill="#a83a2a"/>
<path d="M150 0 L165 0 L165 31 L152 31 Z" fill="#b05040"/>
<path d="M165 17 L183 22 L183 38 L166 35 Z" fill="#a03030"/>
<path d="M141 113 L183 77 L183 96 L150 120 Z" fill="#8e8c88"/>
<path d="M142 118 L183 104 L183 165 L142 160 Z" fill="#8a8072"/>
<rect x="92" y="95" width="7" height="40" fill="#4a5a7a"/><rect x="104" y="92" width="7" height="42" fill="#4a5a7a"/><rect x="115" y="90" width="7" height="45" fill="#4a5a7a"/>
<path d="M125 85 L135 82 L136 146 L126 144 Z" fill="#b85a48"/>
</symbol><symbol id="t6" viewBox="0 0 183 183" preserveAspectRatio="none">
<defs><linearGradient id="g6s" x1="0" y1="0" x2="0" y2="1"><stop offset="0" stop-color="#5a92d8"/><stop offset="0.22" stop-color="#a8c8e8"/><stop offset="0.4" stop-color="#ece4ea"/><stop offset="0.5" stop-color="#f07050"/><stop offset="0.6" stop-color="#f0c030"/><stop offset="0.68" stop-color="#58a030"/><stop offset="0.78" stop-color="#3a7a30"/><stop offset="0.8" stop-color="#9a50b0"/><stop offset="1" stop-color="#8a40a0"/></linearGradient></defs>
<rect width="183" height="183" fill="url(#g6s)"/>
<path d="M133 0 L183 0 L183 80 L160 60 L140 40 L125 38 Z" fill="#5aa838"/>
<path d="M40 140 Q100 145 140 170 L183 183 L40 183 Z" fill="#d868b8"/>
<path d="M71 66 L86 69 L80 91 L65 136 L62 100 Z" fill="#7a78b8"/>
<path d="M65 136 L80 91 L126 79 L126 139 Z" fill="#a890c8"/>
<path d="M80 90 L160 30 L150 72 L86 96 Z" fill="#6e70a8"/>
<path d="M126 79 L160 31 L183 60 L183 109 L145 109 L145 154 L126 145 Z" fill="#c83020"/>
<path d="M148 109 L183 82 L183 112 L148 112 Z" fill="#4a8a3a"/>
<path d="M148 112 L183 112 L183 160 L148 158 Z" fill="#e8a030"/>
<rect x="150" y="117" width="9" height="38" fill="#f0f0f0"/><rect x="152" y="119" width="5" height="35" fill="#e05030"/>
<rect x="172" y="115" width="9" height="21" fill="#3070c0"/>
<rect x="92" y="47" width="9" height="20" fill="#5a3a30"/>
<rect x="70" y="122" width="6" height="16" fill="#e0e0f0"/><rect x="88" y="118" width="7" height="18" fill="#e0e0f0"/><rect x="105" y="114" width="9" height="20" fill="#e0e0f0"/>
<rect x="108" y="88" width="9" height="16" fill="#e0e0f0"/><rect x="137" y="78" width="9" height="18" fill="#e0e0f0"/>
<path d="M0 130 Q30 125 60 140 L40 150 L0 150 Z" fill="#4a8a3a"/>
</symbol><symbol id="t7" viewBox="0 0 183 183" preserveAspectRatio="none">
<defs><linearGradient id="g7s" x1="0" y1="0" x2="0" y2="1"><stop offset="0" stop-color="#6a9ec0"/><stop offset="0.28" stop-color="#7a80c8"/><stop offset="0.45" stop-color="#e090b0"/><stop offset="0.57" stop-color="#d87858"/><stop offset="0.64" stop-color="#4a4a40"/><stop offset="1" stop-color="#506050"/></linearGradient>
<radialGradient id="g7sun"><stop offset="0" stop-color="#fafad0"/><stop offset="0.45" stop-color="#e8e860"/><stop offset="1" stop-color="#c8d860" stop-opacity="0"/></radialGradient></defs>
<rect width="183" height="183" fill="url(#g7s)"/>
<path d="M60 0 L183 0 L183 40 L130 60 L70 50 Z" fill="#8070c0" opacity="0.5"/>
<circle cx="22" cy="19" r="20" fill="url(#g7sun)"/>
<path d="M0 120 L60 140 L95 183 L0 183 Z" fill="#5e6e66"/>
<path d="M60 103 L72 70 L94 70 L158 30 L183 64 L183 80 L150 60 L90 90 L70 110 Z" fill="#3a2830"/>
<path d="M60 103 L87 88 L87 147 L60 140 Z" fill="#7a2a30"/>
<path d="M87 88 L133 79 L133 144 L87 147 Z" fill="#2a5090"/>
<path d="M133 79 L158 30 L183 64 L183 91 L143 109 L143 144 L133 144 Z" fill="#c8a030"/>
<path d="M143 109 L183 82 L183 100 L150 118 Z" fill="#3a2830"/>
<path d="M150 118 L183 112 L183 160 L150 160 Z" fill="#a02020"/>
<rect x="92" y="98" width="8" height="20" fill="#e8c050"/><rect x="105" y="96" width="8" height="20" fill="#e8c050"/><rect x="119" y="93" width="8" height="20" fill="#e8c050"/>
<rect x="110" y="125" width="8" height="20" fill="#e8c050"/><rect x="158" y="125" width="8" height="15" fill="#e8c050"/><rect x="156" y="55" width="7" height="12" fill="#e8c050"/>
<path d="M80 150 L180 160 L183 183 L110 183 Z" fill="#4a6048"/>
</symbol><symbol id="t8" viewBox="0 0 183 183" preserveAspectRatio="none">
<defs><linearGradient id="g8s" x1="0" y1="0" x2="0" y2="1"><stop offset="0" stop-color="#b8c4cc"/><stop offset="0.2" stop-color="#a0bcd4"/><stop offset="0.35" stop-color="#80b0d8"/><stop offset="0.5" stop-color="#d0d0c8"/><stop offset="0.6" stop-color="#b0b0b4"/><stop offset="0.72" stop-color="#9a9aa0"/><stop offset="1" stop-color="#6a6664"/></linearGradient></defs>
<rect width="183" height="183" fill="url(#g8s)"/>
<path d="M0 35 L90 75 L0 55 Z" fill="#7ab0e0" opacity="0.7"/>
<path d="M0 125 L25 120 L25 135 L0 135 Z" fill="#8a8a90"/>
<path d="M0 134 L66 133 L183 170 L183 183 L0 183 Z" fill="#6a6462"/>
<path d="M62 136 L183 168 L183 175 L62 140 Z" fill="#a89888"/>
<path d="M5 176 L35 142 M25 183 L45 150" stroke="#d8d8d8" stroke-width="1.5"/>
<path d="M64 103 L71 69 L98 69 L98 140 L64 136 Z" fill="#c07038"/>
<path d="M91 85 L161 24 L164 30 L128 72 Z" fill="#8a3020"/>
<path d="M71 69 L98 69 L91 85 L75 85 Z" fill="#8a3020"/>
<path d="M92 84 L113 80 L113 146 L92 142 Z" fill="#c88848"/>
<path d="M113 80 L161 30 L183 8 L183 160 L113 146 Z" fill="#a85a30"/>
<path d="M128 73 L136 70 L136 148 L128 146 Z" fill="#d09030"/>
<path d="M143 111 L183 93 L183 110 L148 122 Z" fill="#c42020"/>
<path d="M145 120 L183 110 L183 160 L145 152 Z" fill="#c86030"/>
<rect x="160" y="118" width="7" height="36" fill="#e8e0d0"/>
<rect x="165" y="45" width="7" height="18" fill="#e8e0d0"/><rect x="162" y="85" width="7" height="15" fill="#e8e0d0"/>
<rect x="97" y="95" width="10" height="16" fill="#f0e0c0"/><rect x="97" y="120" width="10" height="16" fill="#f0e0c0"/>
</symbol><symbol id="t9" viewBox="0 0 183 183" preserveAspectRatio="none">
<defs><linearGradient id="g9s" x1="0" y1="0" x2="0" y2="1"><stop offset="0" stop-color="#b0a8e0"/><stop offset="0.3" stop-color="#8888c8"/><stop offset="0.45" stop-color="#7070b0"/><stop offset="0.5" stop-color="#9898c0"/><stop offset="1" stop-color="#e8e0f0"/></linearGradient></defs>
<rect width="183" height="183" fill="url(#g9s)"/>
<path d="M0 90 L60 84 L70 95 L70 135 L0 128 Z" fill="#5a5a66"/>
<path d="M0 85 L55 82 L75 90 L40 98 L0 100 Z" fill="#e4e4ec"/>
<path d="M68 93 L132 73 L183 13 L183 150 L68 135 Z" fill="#5a5a62"/>
<path d="M44 106 L71 79 L89 70 L170 1 L183 1 L183 13 L132 73 L68 93 Z" fill="#ececf4"/>
<path d="M138 112 L183 79 L183 100 L150 118 Z" fill="#ececf4"/>
<path d="M150 118 L183 105 L183 160 L150 150 Z" fill="#4a4a52"/>
<path d="M70 95 L73 95 L75 140 L71 140 Z M82 90 L87 90 L89 145 L84 145 Z M98 86 L104 86 L106 150 L100 150 Z M120 80 L126 80 L128 155 L122 155 Z" fill="#c8c8d0"/>
<path d="M0 125 Q40 128 75 150 Q100 170 125 183 L0 183 Z" fill="#e6def2"/>
<path d="M75 140 L183 155 L183 183 L125 183 Q100 165 75 150 Z" fill="#7e8494"/>
</symbol><symbol id="t10" viewBox="0 0 183 183" preserveAspectRatio="none">
<defs><linearGradient id="g10s" x1="0" y1="0" x2="0" y2="1"><stop offset="0" stop-color="#c8c8c4"/><stop offset="0.3" stop-color="#d0d0cc"/><stop offset="0.45" stop-color="#c0c0bc"/><stop offset="0.6" stop-color="#a09888"/><stop offset="1" stop-color="#8a8276"/></linearGradient></defs>
<rect width="183" height="183" fill="url(#g10s)"/>
<path d="M20 55 Q60 50 80 62 L20 65 Z" fill="#e8e8e4"/>
<path d="M0 88 Q40 80 70 86 L70 120 L0 120 Z" fill="#9a968c"/>
<path d="M0 120 L183 130 L183 183 L0 183 Z" fill="#8a8070"/>
<path d="M67 69 L86 69 L86 137 L67 132 Z" fill="#a8a49c"/>
<path d="M85 95 L168 7 L183 25 L136 78 L86 99 Z" fill="#8a8680"/>
<path d="M86 99 L127 75 L127 150 L86 137 Z" fill="#c8c4bc"/>
<path d="M127 75 L168 10 L183 36 L183 150 L127 150 Z" fill="#5a5450"/>
<path d="M145 107 L183 78 L183 96 L150 115 Z" fill="#9a9690"/>
<rect x="104" y="91" width="9" height="40" fill="#3a3a38"/>
<rect x="85" y="110" width="7" height="30" fill="#3a3a38"/>
<rect x="93" y="42" width="3" height="25" fill="#6a6a68"/>
<path d="M131 75 L135 75 L137 150 L133 150 Z" fill="#8a8680"/>
</symbol><symbol id="t11" viewBox="0 0 183 183" preserveAspectRatio="none">
<defs><linearGradient id="g11s" x1="0" y1="0" x2="0" y2="1"><stop offset="0" stop-color="#80c4ec"/><stop offset="0.35" stop-color="#50a8e4"/><stop offset="0.55" stop-color="#40a0e0"/><stop offset="0.6" stop-color="#d89060"/><stop offset="1" stop-color="#c09080"/></linearGradient></defs>
<rect width="183" height="183" fill="url(#g11s)"/>
<path d="M0 80 L36 95 L40 160 L0 168 Z" fill="#d89060"/>
<path d="M36 92 L50 85 L66 95 L66 136 L40 140 Z" fill="#e8c098"/>
<path d="M0 168 L48 140 L30 183 L0 183 Z" fill="#c89898"/>
<path d="M30 183 L48 140 L62 140 L105 183 Z" fill="#b8c0cc"/>
<path d="M66 90 L98 60 L98 15 L145 0 L183 0 L183 183 L105 183 L66 140 Z" fill="#e09450"/>
<path d="M98 15 L145 0 L162 8 L120 35 L98 35 Z" fill="#a85a38"/>
<path d="M130 74 L183 7 L183 183 L137 183 Z" fill="#e8d060"/>
<path d="M72 95 L145 40 L150 50 L80 105 Z" fill="#b05a38"/>
<path d="M145 113 L183 84 L183 98 L150 125 Z" fill="#a84030"/>
<rect x="110" y="35" width="7" height="18" fill="#3050a0"/>
<rect x="148" y="125" width="25" height="25" fill="#f0f0f0"/><rect x="152" y="128" width="6" height="20" fill="#40a060"/><rect x="162" y="128" width="6" height="20" fill="#a0c030"/>
<rect x="125" y="125" width="10" height="30" fill="#a0c030"/>
<rect x="100" y="118" width="8" height="30" fill="#e05030"/>
<rect x="88" y="125" width="7" height="28" fill="#3060c0"/>
<path d="M140 155 L183 160 L183 183 L140 183 Z" fill="#b05060"/>
</symbol><symbol id="t12" viewBox="0 0 183 183" preserveAspectRatio="none">
<defs><linearGradient id="g12s" x1="0" y1="0" x2="1" y2="1"><stop offset="0" stop-color="#8a8a44"/><stop offset="0.35" stop-color="#5e8a44"/><stop offset="0.55" stop-color="#3a8060"/><stop offset="1" stop-color="#8a6a40"/></linearGradient></defs>
<rect width="183" height="183" fill="url(#g12s)"/>
<ellipse cx="40" cy="30" rx="30" ry="8" fill="#9ac070" opacity="0.5"/>
<path d="M120 0 L183 0 L183 80 L150 40 Z" fill="#a07a40" opacity="0.5"/>
<path d="M0 93 L61 92 L61 104 L0 108 Z" fill="#b02040"/>
<path d="M0 106 L61 103 L61 125 L0 128 Z" fill="#e8e4c8"/>
<path d="M61 103 L71 70 L79 85 L79 132 L61 124 Z" fill="#c03a30"/>
<path d="M79 88 L126 77 L126 148 L79 134 Z" fill="#ece8d0"/>
<path d="M79 88 L157 31 L126 75 Z" fill="#c8c8e8"/>
<path d="M126 77 L157 31 L183 68 L183 80 L126 80 Z" fill="#7a2080"/>
<path d="M134 76 L157 39 L181 76 Z" fill="#e8d890"/>
<path d="M126 80 L183 80 L148 108 L126 108 Z" fill="#e0d090"/>
<path d="M147 108 L183 80 L183 148 L147 148 Z" fill="#c82a2a"/>
<path d="M126 106 L183 104 L183 110 L126 112 Z" fill="#6a2070"/>
<path d="M98 52 L110 50 L112 70 L100 72 Z" fill="#c04a30"/><path d="M97 52 L104 38 L112 50 Z" fill="#e0e0f0"/>
<rect x="88" y="95" width="6" height="12" fill="#6a6a80"/><rect x="102" y="92" width="6" height="12" fill="#6a6a80"/><rect x="116" y="90" width="6" height="12" fill="#6a6a80"/>
<rect x="90" y="120" width="6" height="12" fill="#6a6a80"/><rect x="104" y="118" width="6" height="14" fill="#6a6a80"/>
<rect x="140" y="55" width="10" height="14" fill="#9a6a60"/>
<path d="M0 118 Q30 115 60 128 L80 150 L126 152 L183 148 L183 183 L0 183 Z" fill="#b04020"/>
<path d="M60 150 Q90 160 120 175 L100 183 L50 183 Z" fill="#d05a30" opacity="0.7"/>
</symbol><symbol id="t13" viewBox="0 0 183 183" preserveAspectRatio="none">
<defs><linearGradient id="g13s" x1="0" y1="0" x2="1" y2="0"><stop offset="0" stop-color="#98a2b2"/><stop offset="0.35" stop-color="#ccbca8"/><stop offset="0.6" stop-color="#aab8cc"/><stop offset="1" stop-color="#b8c4d6"/></linearGradient></defs>
<rect width="183" height="183" fill="url(#g13s)"/>
<path d="M30 10 Q55 40 50 70 Q40 90 20 85 Q25 50 30 10 Z" fill="#d8c4a8" opacity="0.7"/>
<path d="M70 0 L183 0 L183 50 L120 70 L70 60 Z" fill="#8090a8" opacity="0.6"/>
<path d="M0 85 Q30 80 66 90 L66 140 L0 140 Z" fill="#9ab0c8"/>
<path d="M0 138 L183 138 L183 183 L0 183 Z" fill="#e2e4f2"/>
<path d="M65 71 L74 68 L85 89 L85 140 L65 139 Z" fill="#b08050"/>
<path d="M85 86 L136 71 L136 146 L85 140 Z" fill="#8a7868"/>
<path d="M136 71 L170 30 L183 40 L183 150 L136 146 Z" fill="#8e7c6c"/>
<path d="M136 72 L155 55 L155 146 L136 146 Z" fill="#c8c0c4"/>
<path d="M74 68 L170 26 L183 35 L183 56 L137 80 L85 89 Z" fill="#e8ecf4"/>
<path d="M140 113 L183 80 L183 110 L150 118 Z" fill="#e8ecf4"/>
<rect x="162" y="45" width="16" height="22" fill="#e0e0e0"/><rect x="165" y="48" width="10" height="16" fill="#4a3a30"/>
<rect x="100" y="95" width="10" height="20" fill="#6a5a50"/>
<path d="M0 135 Q80 140 183 150 L183 183 L0 183 Z" fill="#e6e8f4"/>
</symbol><symbol id="t14" viewBox="0 0 183 183" preserveAspectRatio="none">
<defs><radialGradient id="g14s" cx="0.16" cy="0.48" r="0.62"><stop offset="0" stop-color="#fffbe0"/><stop offset="0.08" stop-color="#f8e080"/><stop offset="0.25" stop-color="#e0a848"/><stop offset="0.5" stop-color="#9a6a38"/><stop offset="0.8" stop-color="#4e3a2c"/><stop offset="1" stop-color="#3a2a22"/></radialGradient>
<linearGradient id="g14g" x1="0" y1="0" x2="0" y2="1"><stop offset="0" stop-color="#6a5040" stop-opacity="0.3"/><stop offset="1" stop-color="#2a2420"/></linearGradient></defs>
<rect width="183" height="183" fill="url(#g14s)"/>
<path d="M0 100 L183 100 L183 183 L0 183 Z" fill="url(#g14g)"/>
<path d="M59 93 L169 25 L183 40 L135 72 L62 95 Z" fill="#b88040"/>
<path d="M62 94 L135 72 L135 146 L62 130 Z" fill="#a87038"/>
<path d="M135 72 L169 28 L183 44 L183 158 L135 146 Z" fill="#3a2a22"/>
<path d="M66 100 L70 100 L70 135 L66 135 Z M80 96 L86 96 L86 138 L80 138 Z M96 90 L102 90 L102 140 L96 140 Z M112 84 L118 84 L118 142 L112 142 Z M126 78 L132 78 L132 145 L126 145 Z" fill="#d09848"/>
<rect x="163" y="50" width="14" height="28" fill="#201814"/>
<path d="M103 55 L106 48 L108 55 Z" fill="#4a3020"/>
</symbol><symbol id="t15" viewBox="0 0 183 183" preserveAspectRatio="none">
<defs><linearGradient id="g15s" x1="0" y1="0" x2="0" y2="1"><stop offset="0" stop-color="#4a78b8"/><stop offset="0.25" stop-color="#6a98d0"/><stop offset="0.45" stop-color="#b8c8d8"/><stop offset="0.49" stop-color="#c0c8d0"/><stop offset="0.5" stop-color="#70a040"/><stop offset="0.75" stop-color="#6a9838"/><stop offset="0.78" stop-color="#a8b058"/><stop offset="1" stop-color="#b0b060"/></linearGradient></defs>
<rect width="183" height="183" fill="url(#g15s)"/>
<path d="M25 100 Q40 95 50 110 L50 130 L25 130 Z" fill="#3a7a30"/>
<path d="M0 115 Q20 120 35 150 L0 150 Z" fill="#a090c0"/>
<path d="M0 148 L183 155 L183 183 L0 183 Z" fill="#b0b45c"/>
<path d="M63 137 L72 68 L78 71 L78 138 Z" fill="#d83a24"/>
<path d="M78 69 L96 69 L80 96 Z" fill="#2a2a38"/>
<path d="M80 98 L129 77 L129 143 L80 137 Z" fill="#d83a24"/>
<path d="M129 77 L183 1 L183 111 L146 111 L146 156 L129 150 Z" fill="#e04020"/>
<path d="M79 95 L129 51 L183 1 L183 15 L129 77 L80 98 Z" fill="#7a8a38"/>
<path d="M146 111 L183 73 L183 118 L146 118 Z" fill="#a09888"/>
<path d="M146 118 L183 118 L183 170 L146 162 Z" fill="#c02a20"/>
<rect x="156" y="128" width="12" height="27" fill="#a8b8b0"/>
<rect x="100" y="105" width="14" height="35" fill="#b04030"/><rect x="102" y="108" width="10" height="30" fill="#8a8a60"/>
<rect x="135" y="85" width="4" height="60" fill="#f0e0e0"/>
</symbol></defs></svg>
<svg style="left:1522px;top:339px" width="732" height="732" viewBox="0 0 732 732"><use href="#t0" x="0" y="0" width="183" height="183"/><use href="#t1" x="183" y="0" width="183" height="183"/><use href="#t2" x="366" y="0" width="183" height="183"/><use href="#t3" x="549" y="0" width="183" height="183"/><use href="#t4" x="0" y="183" width="183" height="183"/><use href="#t5" x="183" y="183" width="183" height="183"/><use href="#t6" x="366" y="183" width="183" height="183"/><use href="#t7" x="549" y="183" width="183" height="183"/><use href="#t8" x="0" y="366" width="183" height="183"/><use href="#t9" x="183" y="366" width="183" height="183"/><use href="#t10" x="366" y="366" width="183" height="183"/><use href="#t11" x="549" y="366" width="183" height="183"/><use href="#t12" x="0" y="549" width="183" height="183"/><use href="#t13" x="183" y="549" width="183" height="183"/><use href="#t14" x="366" y="549" width="183" height="183"/><use href="#t15" x="549" y="549" width="183" height="183"/></svg>
<div style="left:1511px;top:1077px;width:40px;height:40px;border-radius:6px;background:#f07a20"></div>
<svg style="left:1514px;top:1080px" width="34" height="34" viewBox="0 0 732 732"><use href="#t0" x="0" y="0" width="183" height="183"/><use href="#t1" x="183" y="0" width="183" height="183"/><use href="#t2" x="366" y="0" width="183" height="183"/><use href="#t3" x="549" y="0" width="183" height="183"/><use href="#t4" x="0" y="183" width="183" height="183"/><use href="#t5" x="183" y="183" width="183" height="183"/><use href="#t6" x="366" y="183" width="183" height="183"/><use href="#t7" x="549" y="183" width="183" height="183"/><use href="#t8" x="0" y="366" width="183" height="183"/><use href="#t9" x="183" y="366" width="183" height="183"/><use href="#t10" x="366" y="366" width="183" height="183"/><use href="#t11" x="549" y="366" width="183" height="183"/><use href="#t12" x="0" y="549" width="183" height="183"/><use href="#t13" x="183" y="549" width="183" height="183"/><use href="#t14" x="366" y="549" width="183" height="183"/><use href="#t15" x="549" y="549" width="183" height="183"/></svg>
<div style="left:1555px;top:1079px;width:36px;height:36px;border-radius:5px;background:#d1d5db"></div>
<svg style="left:1556px;top:1080px" width="34" height="34" viewBox="0 0 183 183"><use href="#t0" x="0" y="0" width="183" height="183"/></svg>
<div style="left:1597px;top:1079px;width:36px;height:36px;border-radius:5px;background:#d1d5db"></div>
<svg style="left:1598px;top:1080px" width="34" height="34" viewBox="0 0 183 183"><use href="#t1" x="0" y="0" width="183" height="183"/></svg>
<div style="left:1639px;top:1079px;width:36px;height:36px;border-radius:5px;background:#d1d5db"></div>
<svg style="left:1640px;top:1080px" width="34" height="34" viewBox="0 0 183 183"><use href="#t2" x="0" y="0" width="183" height="183"/></svg>
<div style="left:1681px;top:1079px;width:36px;height:36px;border-radius:5px;background:#d1d5db"></div>
<svg style="left:1682px;top:1080px" width="34" height="34" viewBox="0 0 183 183"><use href="#t3" x="0" y="0" width="183" height="183"/></svg>
<div style="left:1723px;top:1079px;width:36px;height:36px;border-radius:5px;background:#d1d5db"></div>
<svg style="left:1724px;top:1080px" width="34" height="34" viewBox="0 0 183 183"><use href="#t4" x="0" y="0" width="183" height="183"/></svg>
<div style="left:1765px;top:1079px;width:36px;height:36px;border-radius:5px;background:#d1d5db"></div>
<svg style="left:1766px;top:1080px" width="34" height="34" viewBox="0 0 183 183"><use href="#t5" x="0" y="0" width="183" height="183"/></svg>
<div style="left:1807px;top:1079px;width:36px;height:36px;border-radius:5px;background:#d1d5db"></div>
<svg style="left:1808px;top:1080px" width="34" height="34" viewBox="0 0 183 183"><use href="#t6" x="0" y="0" width="183" height="183"/></svg>
<div style="left:1849px;top:1079px;width:36px;height:36px;border-radius:5px;background:#d1d5db"></div>
<svg style="left:1850px;top:1080px" width="34" height="34" viewBox="0 0 183 183"><use href="#t7" x="0" y="0" width="183" height="183"/></svg>
<div style="left:1891px;top:1079px;width:36px;height:36px;border-radius:5px;background:#d1d5db"></div>
<svg style="left:1892px;top:1080px" width="34" height="34" viewBox="0 0 183 183"><use href="#t8" x="0" y="0" width="183" height="183"/></svg>
<div style="left:1933px;top:1079px;width:36px;height:36px;border-radius:5px;background:#d1d5db"></div>
<svg style="left:1934px;top:1080px" width="34" height="34" viewBox="0 0 183 183"><use href="#t9" x="0" y="0" width="183" height="183"/></svg>
<div style="left:1975px;top:1079px;width:36px;height:36px;border-radius:5px;background:#d1d5db"></div>
<svg style="left:1976px;top:1080px" width="34" height="34" viewBox="0 0 183 183"><use href="#t10" x="0" y="0" width="183" height="183"/></svg>
<div style="left:2017px;top:1079px;width:36px;height:36px;border-radius:5px;background:#d1d5db"></div>
<svg style="left:2018px;top:1080px" width="34" height="34" viewBox="0 0 183 183"><use href="#t11" x="0" y="0" width="183" height="183"/></svg>
<div style="left:2059px;top:1079px;width:36px;height:36px;border-radius:5px;background:#d1d5db"></div>
<svg style="left:2060px;top:1080px" width="34" height="34" viewBox="0 0 183 183"><use href="#t12" x="0" y="0" width="183" height="183"/></svg>
<div style="left:2101px;top:1079px;width:36px;height:36px;border-radius:5px;background:#d1d5db"></div>
<svg style="left:2102px;top:1080px" width="34" height="34" viewBox="0 0 183 183"><use href="#t13" x="0" y="0" width="183" height="183"/></svg>
<div style="left:2143px;top:1079px;width:36px;height:36px;border-radius:5px;background:#d1d5db"></div>
<svg style="left:2144px;top:1080px" width="34" height="34" viewBox="0 0 183 183"><use href="#t14" x="0" y="0" width="183" height="183"/></svg>
<div style="left:2185px;top:1079px;width:36px;height:36px;border-radius:5px;background:#d1d5db"></div>
<svg style="left:2186px;top:1080px" width="34" height="34" viewBox="0 0 183 183"><use href="#t15" x="0" y="0" width="183" height="183"/></svg>
<div style="left:2227px;top:1079px;width:36px;height:36px;border-radius:5px;background:#d1d5db"></div>
<div style="left:2228px;top:1080px;width:34px;height:34px;background:#000"></div>
<svg style="left:2228px;top:1080px" width="34" height="34" viewBox="0 0 240 240"><use href="#scrib" stroke="#fff"/></svg>
<svg style="left:2479px;top:352px" width="10" height="10" viewBox="0 0 10 10"><path d="M1 1 L9 9 M9 1 L1 9" stroke="#e5e7eb" stroke-width="1.3"/></svg>
<div class="btn" style="left:1274px;top:1148px;width:192px;height:42px;border-radius:8px;"></div>
<div class="btn" style="left:1481px;top:1148px;width:192px;height:42px;border-radius:8px;"></div>
<span class="t" style="left:1481.0px;width:192px;text-align:center;top:1159.8px;font-size:14.5px;line-height:18.5px;color:#f3f4f6;font-weight:700;">Save</span>
<div class="btn" style="left:1689px;top:1148px;width:192px;height:42px;border-radius:8px;"></div>
<span class="t" style="left:1689.0px;width:192px;text-align:center;top:1159.8px;font-size:14.5px;line-height:18.5px;color:#f3f4f6;font-weight:700;">Zip</span>
<div class="btn" style="left:1896px;top:1148px;width:192px;height:42px;border-radius:8px;"></div>
<span class="t" style="left:1896.0px;width:192px;text-align:center;top:1159.8px;font-size:14.5px;line-height:18.5px;color:#f3f4f6;font-weight:700;">Send to img2img</span>
<div class="btn" style="left:2104px;top:1148px;width:192px;height:42px;border-radius:8px;"></div>
<span class="t" style="left:2104.0px;width:192px;text-align:center;top:1159.8px;font-size:14.5px;line-height:18.5px;color:#f3f4f6;font-weight:700;">Send to inpaint</span>
<div class="btn" style="left:2311px;top:1148px;width:192px;height:42px;border-radius:8px;"></div>
<span class="t" style="left:2311.0px;width:192px;text-align:center;top:1159.8px;font-size:14.5px;line-height:18.5px;color:#f3f4f6;font-weight:700;">Send to extras</span>
<svg style="left:1360px;top:1162px" width="17" height="14" viewBox="0 0 17 14"><path d="M1 2 H6 L7.5 3.5 H14 V12 H1 Z" fill="#c2410c"/><path d="M3 5 H16 L14 13 H1 Z" fill="#fcd34d"/></svg>
<span class="t" style="left:1281px;top:1224.6px;font-size:12.8px;line-height:16.8px;color:#e5e7eb;font-weight:400;">Steps: 50, Sampler: Euler a, CFG scale: 5, Seed: 12345, Size: 512x512, Model hash: e1441589a6, Model: v1-5-pruned, ControlNet Enabled: True, ControlNet Module: none, ControlNet Model: control_scribble-fp16</span>
<span class="t" style="left:1281px;top:1244.6px;font-size:12.8px;line-height:16.8px;color:#e5e7eb;font-weight:400;">[c508311e], ControlNet Weight: 1, ControlNet Guidance Strength: 1</span>
<span class="t" style="left:1281px;top:1265.5px;font-size:11px;line-height:15px;color:#394150;font-weight:400;-webkit-text-stroke:0">Time taken: 1m 48.22s  Torch active/reserved: 7613/8572 MiB, Sys VRAM: 10857/24227 MiB (44.85%)</span>
<div style="left:1274px;top:1282px;width:1230px;height:1px;background:#374151"></div>
</body></html>
